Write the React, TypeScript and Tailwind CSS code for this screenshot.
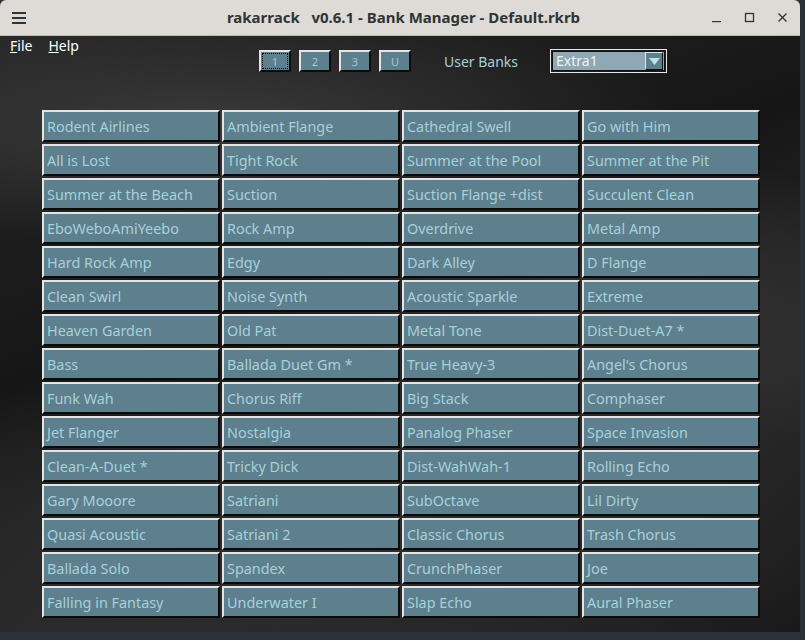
import React from 'react';

const presets: string[][] = [
  ['Rodent Airlines', 'Ambient Flange', 'Cathedral Swell', 'Go with Him'],
  ['All is Lost', 'Tight Rock', 'Summer at the Pool', 'Summer at the Pit'],
  ['Summer at the Beach', 'Suction', 'Suction Flange +dist', 'Succulent Clean'],
  ['EboWeboAmiYeebo', 'Rock Amp', 'Overdrive', 'Metal Amp'],
  ['Hard Rock Amp', 'Edgy', 'Dark Alley', 'D Flange'],
  ['Clean Swirl', 'Noise Synth', 'Acoustic Sparkle', 'Extreme'],
  ['Heaven Garden', 'Old Pat', 'Metal Tone', 'Dist-Duet-A7 *'],
  ['Bass', 'Ballada Duet Gm *', 'True Heavy-3', "Angel's Chorus"],
  ['Funk Wah', 'Chorus Riff', 'Big Stack', 'Comphaser'],
  ['Jet Flanger', 'Nostalgia', 'Panalog Phaser', 'Space Invasion'],
  ['Clean-A-Duet *', 'Tricky Dick', 'Dist-WahWah-1', 'Rolling Echo'],
  ['Gary Mooore', 'Satriani', 'SubOctave', 'Lil Dirty'],
  ['Quasi Acoustic', 'Satriani 2', 'Classic Chorus', 'Trash Chorus'],
  ['Ballada Solo', 'Spandex', 'CrunchPhaser', 'Joe'],
  ['Falling in Fantasy', 'Underwater I', 'Slap Echo', 'Aural Phaser'],
];

const BankButton = ({ label, focused }: { label: string; focused?: boolean }) => (
  <button
    type="button"
    className="relative w-[32px] h-[22px] bg-[#5e7f8d] border-t-2 border-l-2 border-[#e6e6e6] border-b-2 border-r-2 border-b-[#0c0c0c] border-r-[#0c0c0c] text-[11px] leading-none text-[#9fcbd5] flex items-center justify-center"
  >
    {focused && <span className="absolute inset-[1px] border border-dotted border-black" />}
    {label}
  </button>
);

export default function App() {
  return (
    <div className="w-[805px] h-[640px] bg-[#2c3038] overflow-hidden font-['Noto_Sans',sans-serif]">
      <div className="w-[800px] h-[632px] flex flex-col rounded-t-[6px] overflow-hidden">
        {/* Title bar */}
        <div className="h-[36px] bg-[#dedbd7] border-b border-[#bdb9b4] flex items-center pl-[12px] text-[#2e3436]">
          <svg width="14" height="12" viewBox="0 0 14 12" className="shrink-0">
            <rect x="0" y="0" width="14" height="2" fill="#2e3436" />
            <rect x="0" y="5" width="14" height="2" fill="#2e3436" />
            <rect x="0" y="10" width="14" height="2" fill="#2e3436" />
          </svg>
          <div className="flex-1 text-center font-bold text-[15px] pl-[70px] whitespace-pre">
            rakarrack   v0.6.1 - Bank Manager - Default.rkrb
          </div>
          <div className="flex items-center gap-[22px] pr-[12px]">
            <svg width="11" height="11" viewBox="0 0 11 11">
              <rect x="1" y="9" width="9" height="1.2" fill="#2e3436" />
            </svg>
            <svg width="11" height="11" viewBox="0 0 11 11">
              <rect x="1.5" y="1.5" width="8" height="8" fill="none" stroke="#2e3436" strokeWidth="1.3" />
            </svg>
            <svg width="11" height="11" viewBox="0 0 11 11">
              <path d="M1.5 1.5 L9.5 9.5 M9.5 1.5 L1.5 9.5" stroke="#2e3436" strokeWidth="1.3" />
            </svg>
          </div>
        </div>

        {/* Content */}
        <div className="flex-1 bg-[#1c1c1c] bg-[radial-gradient(ellipse_60%_20%_at_25%_15%,#3a3a3a,transparent),radial-gradient(ellipse_50%_25%_at_75%_45%,#333333,transparent),radial-gradient(ellipse_70%_30%_at_40%_85%,#2e2e2e,transparent),linear-gradient(160deg,#262626,#161616_40%,#2a2a2a_70%,#181818)]">
          <div className="flex items-start">
            <div className="w-[259px] flex gap-[16px] pl-[10px] -mt-[1px] text-white text-[14px]">
              <span><span className="underline">F</span>ile</span>
              <span><span className="underline">H</span>elp</span>
            </div>
            <div className="flex items-center mt-[13px]">
              <div className="flex gap-[8px]">
                <BankButton label="1" focused />
                <BankButton label="2" />
                <BankButton label="3" />
                <BankButton label="U" />
              </div>
              <span className="ml-[33px] text-[14px] text-[#a6d1da]">User Banks</span>
              <div className="ml-[32px] w-[117px] h-[24px] border border-[#e6e6e6] p-[1px]">
                <div className="h-full bg-[#8fa8b4] border border-[#111] flex items-center">
                  <span className="flex-1 pl-[3px] text-[14px] text-[#eef4f6] leading-none">Extra1</span>
                  <div className="w-[18px] h-[18px] mr-[1px] bg-[#5e7f8d] border-t border-l border-[#e6e6e6] border-b border-r border-b-[#111] border-r-[#111] flex items-center justify-center">
                    <svg width="11" height="7" viewBox="0 0 11 7">
                      <path d="M0 0 L11 0 L5.5 7 Z" fill="#bfe0e6" />
                    </svg>
                  </div>
                </div>
              </div>
            </div>
          </div>

          <div className="mt-[37px] ml-[42px] grid grid-cols-[repeat(4,178px)] gap-x-[2px] gap-y-[2px]">
            {presets.flat().map((name, i) => (
              <div
                key={i}
                className="h-[32px] bg-[#5e7f8d] border-t-2 border-l-2 border-[#e4e4e4] border-b-2 border-r-2 border-b-[#0a0a0a] border-r-[#0a0a0a] flex items-center pl-[3px] pt-[2px] text-[14.4px] text-[#a6d1da] whitespace-nowrap"
              >
                {name}
              </div>
            ))}
          </div>
        </div>
      </div>
    </div>
  );
}
